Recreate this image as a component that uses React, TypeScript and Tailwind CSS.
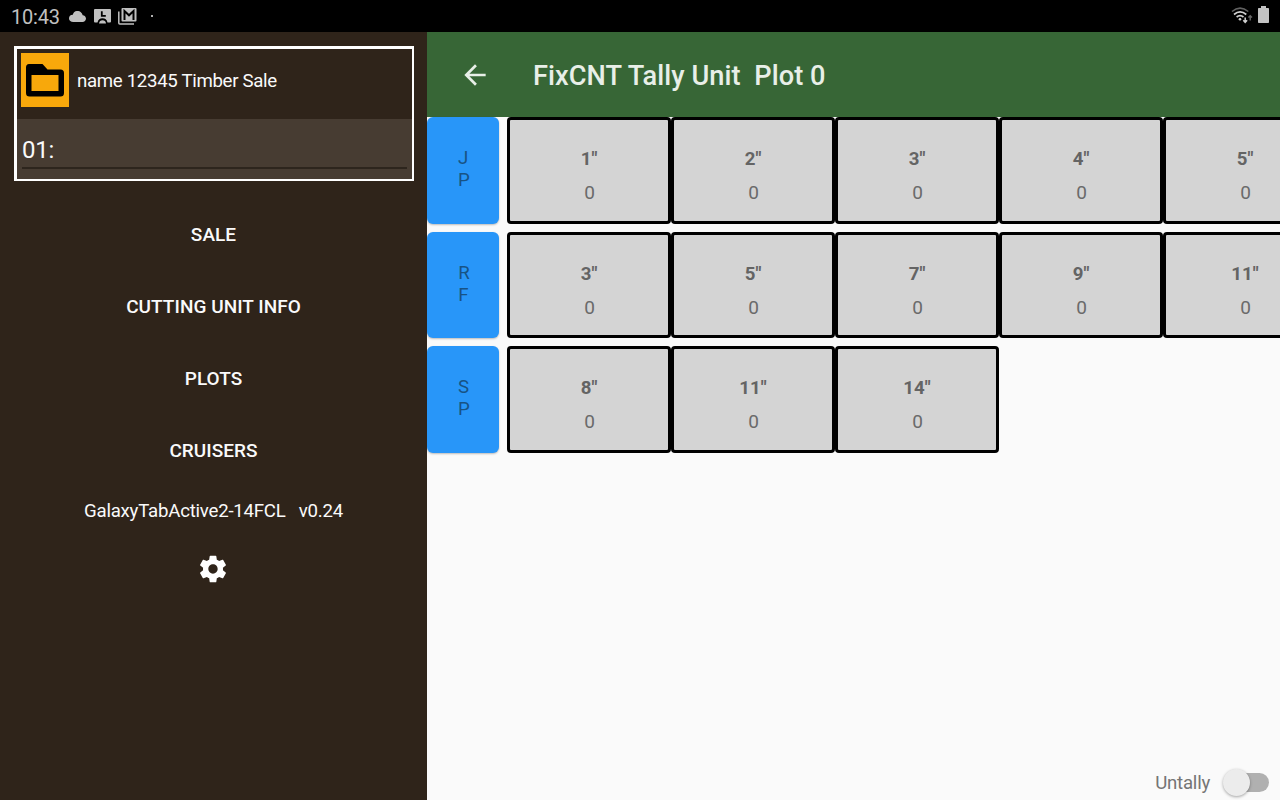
import React from "react";

const rows = [
  { species: ["J", "P"], tallies: ['1"', '2"', '3"', '4"', '5"'] },
  { species: ["R", "F"], tallies: ['3"', '5"', '7"', '9"', '11"'] },
  { species: ["S", "P"], tallies: ['8"', '11"', '14"'] },
];

const menu = ["SALE", "CUTTING UNIT INFO", "PLOTS", "CRUISERS"];

function StatusBar() {
  return (
    <div className="flex h-8 shrink-0 items-center bg-black text-[#c0c0c0]">
      <span className="ml-[11px] mt-[2px] w-[58px] text-[20px] leading-6 tracking-[-0.2px]">10:43</span>
      <svg className="h-[11px] w-[17px]" viewBox="0 0 24 16" preserveAspectRatio="none" fill="currentColor">
        <path d="M19.350 6.040A7.490 7.490 0 0 0 11 0C8.110 0 6.600 1.640 5.350 5.500A5.500 5.500 0 0 0 0 11c0 3 2.690 5 6 5h13c2.760 0 5-2.240 5-5 0-2.640-2.050-4.780-4.650-4.960z" />
      </svg>
      <svg className="ml-2 h-4 w-[17px]" viewBox="0 0 17 16" fill="none">
        <path d="M0 2Q0 1 1 1H16Q17 1 17 2V13.500Q17 14.500 16 14.500H13.500Q12.500 10.300 8.500 10.300T3.500 14.500H1Q0 14.500 0 13.500z" fill="currentColor" />
        <path d="M7.800 3.300V7.800H11.800" stroke="black" strokeWidth="1.800" />
        <path d="M5 15.500Q5.500 12.300 8.500 12.300T12 15.500z" fill="currentColor" />
      </svg>
      <svg className="ml-[7px] h-[17px] w-[19px]" viewBox="0 0 19 17" fill="none">
        <rect x="3.500" y="0" width="15" height="13.500" rx="1" fill="currentColor" />
        <path d="M6.500 12V3L11 7.300L15.500 3V12" stroke="black" strokeWidth="2" />
        <path d="M.8 3.500V15Q.8 16 1.800 16H16" stroke="currentColor" strokeWidth="1.500" />
      </svg>
      <span className="ml-[14px] h-[2px] w-[2px] bg-[#b0b0b0]" />
      <svg className="-mt-[2px] ml-auto h-[18px] w-[22px]" viewBox="0 0 22 18" fill="none" stroke="#d0d0d0">
        <path d="M1 5.500Q9 -1.200 17.300 5.500" stroke="#626262" strokeWidth="1.600" />
        <path d="M3 8.500Q9 3.400 15.300 8.500" strokeWidth="1.700" />
        <path d="M5.600 11Q9 8.300 12.500 11" strokeWidth="1.700" />
        <circle cx="9" cy="13.200" r="1.300" fill="#d0d0d0" stroke="none" />
        <path d="M14.200 11.500V16M12.300 14.300L14.200 16.300L16.100 14.300" strokeWidth="1.500" />
        <path d="M19.200 14.500V10M17.400 11.600L19.200 9.700L21 11.600" stroke="#666" strokeWidth="1.400" />
      </svg>
      <svg className="-mt-[3px] ml-[5px] mr-[11px] h-[17px] w-[11px]" viewBox="0 0 11 17" fill="#c3c3c3">
        <path d="M3 0H8V2H10.200Q11 2 11 2.800V16.200Q11 17 10.200 17H.8Q0 17 0 16.200V2.800Q0 2 .8 2H3z" />
      </svg>
    </div>
  );
}

function Drawer() {
  return (
    <aside className="flex w-[427px] shrink-0 flex-col items-center bg-[#2f241a] text-[#fafafa]">
      <div className="ml-px mt-[14px] flex h-[135px] w-[400px] flex-col border-b-2 border-l-[3px] border-r-2 border-t-[3px] border-white">
        <div className="flex h-[70px] items-start pl-1 pt-1">
          <div className="flex h-[54px] w-12 items-center justify-center bg-[#f8a80b]">
            <svg className="h-[33px] w-[38px]" viewBox="0 0 38 33" fill="none">
              <path d="M3 0H16.500L21.500 5.500H34.500Q38 5.500 38 9V29Q38 32.500 34.500 32.500H3.500Q0 32.500 0 29V3.500Q0 0 3 0zM5.500 11V27H32.500V11z" fill="black" fillRule="evenodd" />
            </svg>
          </div>
          <span className="ml-2 mt-4 text-[18.67px] leading-6 tracking-[-0.33px]">name 12345 Timber Sale</span>
        </div>
        <div className="flex h-[60px] flex-col bg-[#473c32] pl-[5px] pr-[5px] pt-4">
          <span className="h-8 text-[24px] leading-[30px] tracking-[-0.3px]">01:</span>
          <span className="h-[2px] bg-[#2d251d]" />
        </div>
      </div>
      <nav className="mt-[18px] flex flex-col items-center">
        {menu.map((item) => (
          <a key={item} className="flex h-[72px] items-center text-[19px] font-medium leading-6 tracking-[0.04px]">
            {item}
          </a>
        ))}
      </nav>
      <p className="mt-3 whitespace-pre text-[18.67px] leading-6 tracking-[-0.24px]">{"GalaxyTabActive2-14FCL   v0.24"}</p>
      <svg className="mr-px mt-[30px] h-8 w-8" viewBox="0 0 24 24" fill="white">
        <path d="M19.430 12.980c.040-.320.070-.640.070-.980s-.030-.660-.070-.980l2.110-1.650c.190-.150.240-.420.120-.640l-2-3.460c-.120-.220-.390-.300-.610-.220l-2.490 1c-.520-.400-1.080-.730-1.690-.980l-.380-2.650A.488.488 0 0 0 14 2h-4c-.250 0-.460.180-.490.420l-.380 2.650c-.610.250-1.170.590-1.690.980l-2.490-1c-.230-.090-.490 0-.610.220l-2 3.460c-.130.220-.070.490.120.640l2.110 1.650c-.040.320-.070.650-.070.980s.030.660.070.980l-2.110 1.650c-.190.150-.240.420-.120.640l2 3.460c.120.220.390.300.610.220l2.490-1c.520.400 1.080.730 1.690.980l.380 2.650c.030.240.240.420.490.420h4c.250 0 .460-.180.490-.420l.380-2.650c.610-.250 1.170-.590 1.690-.980l2.490 1c.230.090.490 0 .610-.220l2-3.460c.120-.220.070-.490-.120-.640l-2.110-1.650zM12 15.500c-1.930 0-3.500-1.570-3.500-3.500s1.570-3.500 3.500-3.500 3.500 1.570 3.500 3.500-1.570 3.500-3.500 3.500z" />
      </svg>
    </aside>
  );
}

function TallyRow({ species, tallies }: { species: string[]; tallies: string[] }) {
  return (
    <div className="flex h-[106.67px] shrink-0 text-[18.67px]">
      <div className="mr-2 flex w-[72px] shrink-0 items-center justify-center rounded-[6px] bg-[#2896f9] pb-[3px] pl-[2px] leading-[22px] text-[#185384] shadow-[0_1px_2px_rgba(0,0,0,0.25)]">
        <div className="flex flex-col items-start">
          {species.map((letter) => (
            <span key={letter}>{letter}</span>
          ))}
        </div>
      </div>
      {tallies.map((size) => (
        <div
          key={size}
          className="flex w-[164px] shrink-0 flex-col items-center rounded-[4px] border-[3px] border-black bg-[#d4d4d4] pt-[27px] text-[#646464]"
        >
          <span className="h-[34px] font-bold leading-6">{size}</span>
          <span className="pl-px text-[19px] leading-6 text-[#6a6a6a]">0</span>
        </div>
      ))}
    </div>
  );
}

export default function App() {
  return (
    <div className="flex h-[800px] w-[1280px] flex-col overflow-hidden font-[Roboto,sans-serif]">
      <StatusBar />
      <div className="flex min-h-0 flex-1">
        <Drawer />
        <main className="flex min-w-0 flex-1 flex-col overflow-hidden bg-[#fafafa]">
          <header className="flex h-[85.33px] shrink-0 items-center bg-[#376636] text-[#e8efe8]">
            <svg className="ml-8 h-8 w-8" viewBox="0 0 24 24" fill="currentColor">
              <path d="M20 11H7.830l5.590-5.590L12 4l-8 8 8 8 1.410-1.410L7.830 13H20v-2z" />
            </svg>
            <h1 className="ml-[42px] mt-[2px] whitespace-pre text-[27.2px] font-medium leading-8 tracking-[0.06px]">{"FixCNT Tally Unit  Plot 0"}</h1>
          </header>
          <div className="flex flex-1 flex-col gap-[7.83px]">
            {rows.map((row) => (
              <TallyRow key={row.species.join("")} {...row} />
            ))}
          </div>
          <footer className="flex h-[35px] shrink-0 items-center justify-end pr-[11px]">
            <span className="mr-[13px] text-[18.67px] leading-6 tracking-[-0.25px] text-[#757575]">Untally</span>
            <span className="flex h-[19px] w-[46px] items-center rounded-full bg-[linear-gradient(to_right,transparent_13px,#b0b0b0_13px)]">
              <span className="h-[27px] w-[27px] rounded-full bg-[#ececec] shadow-[0_1px_3px_rgba(0,0,0,0.35)]" />
            </span>
          </footer>
        </main>
      </div>
    </div>
  );
}
